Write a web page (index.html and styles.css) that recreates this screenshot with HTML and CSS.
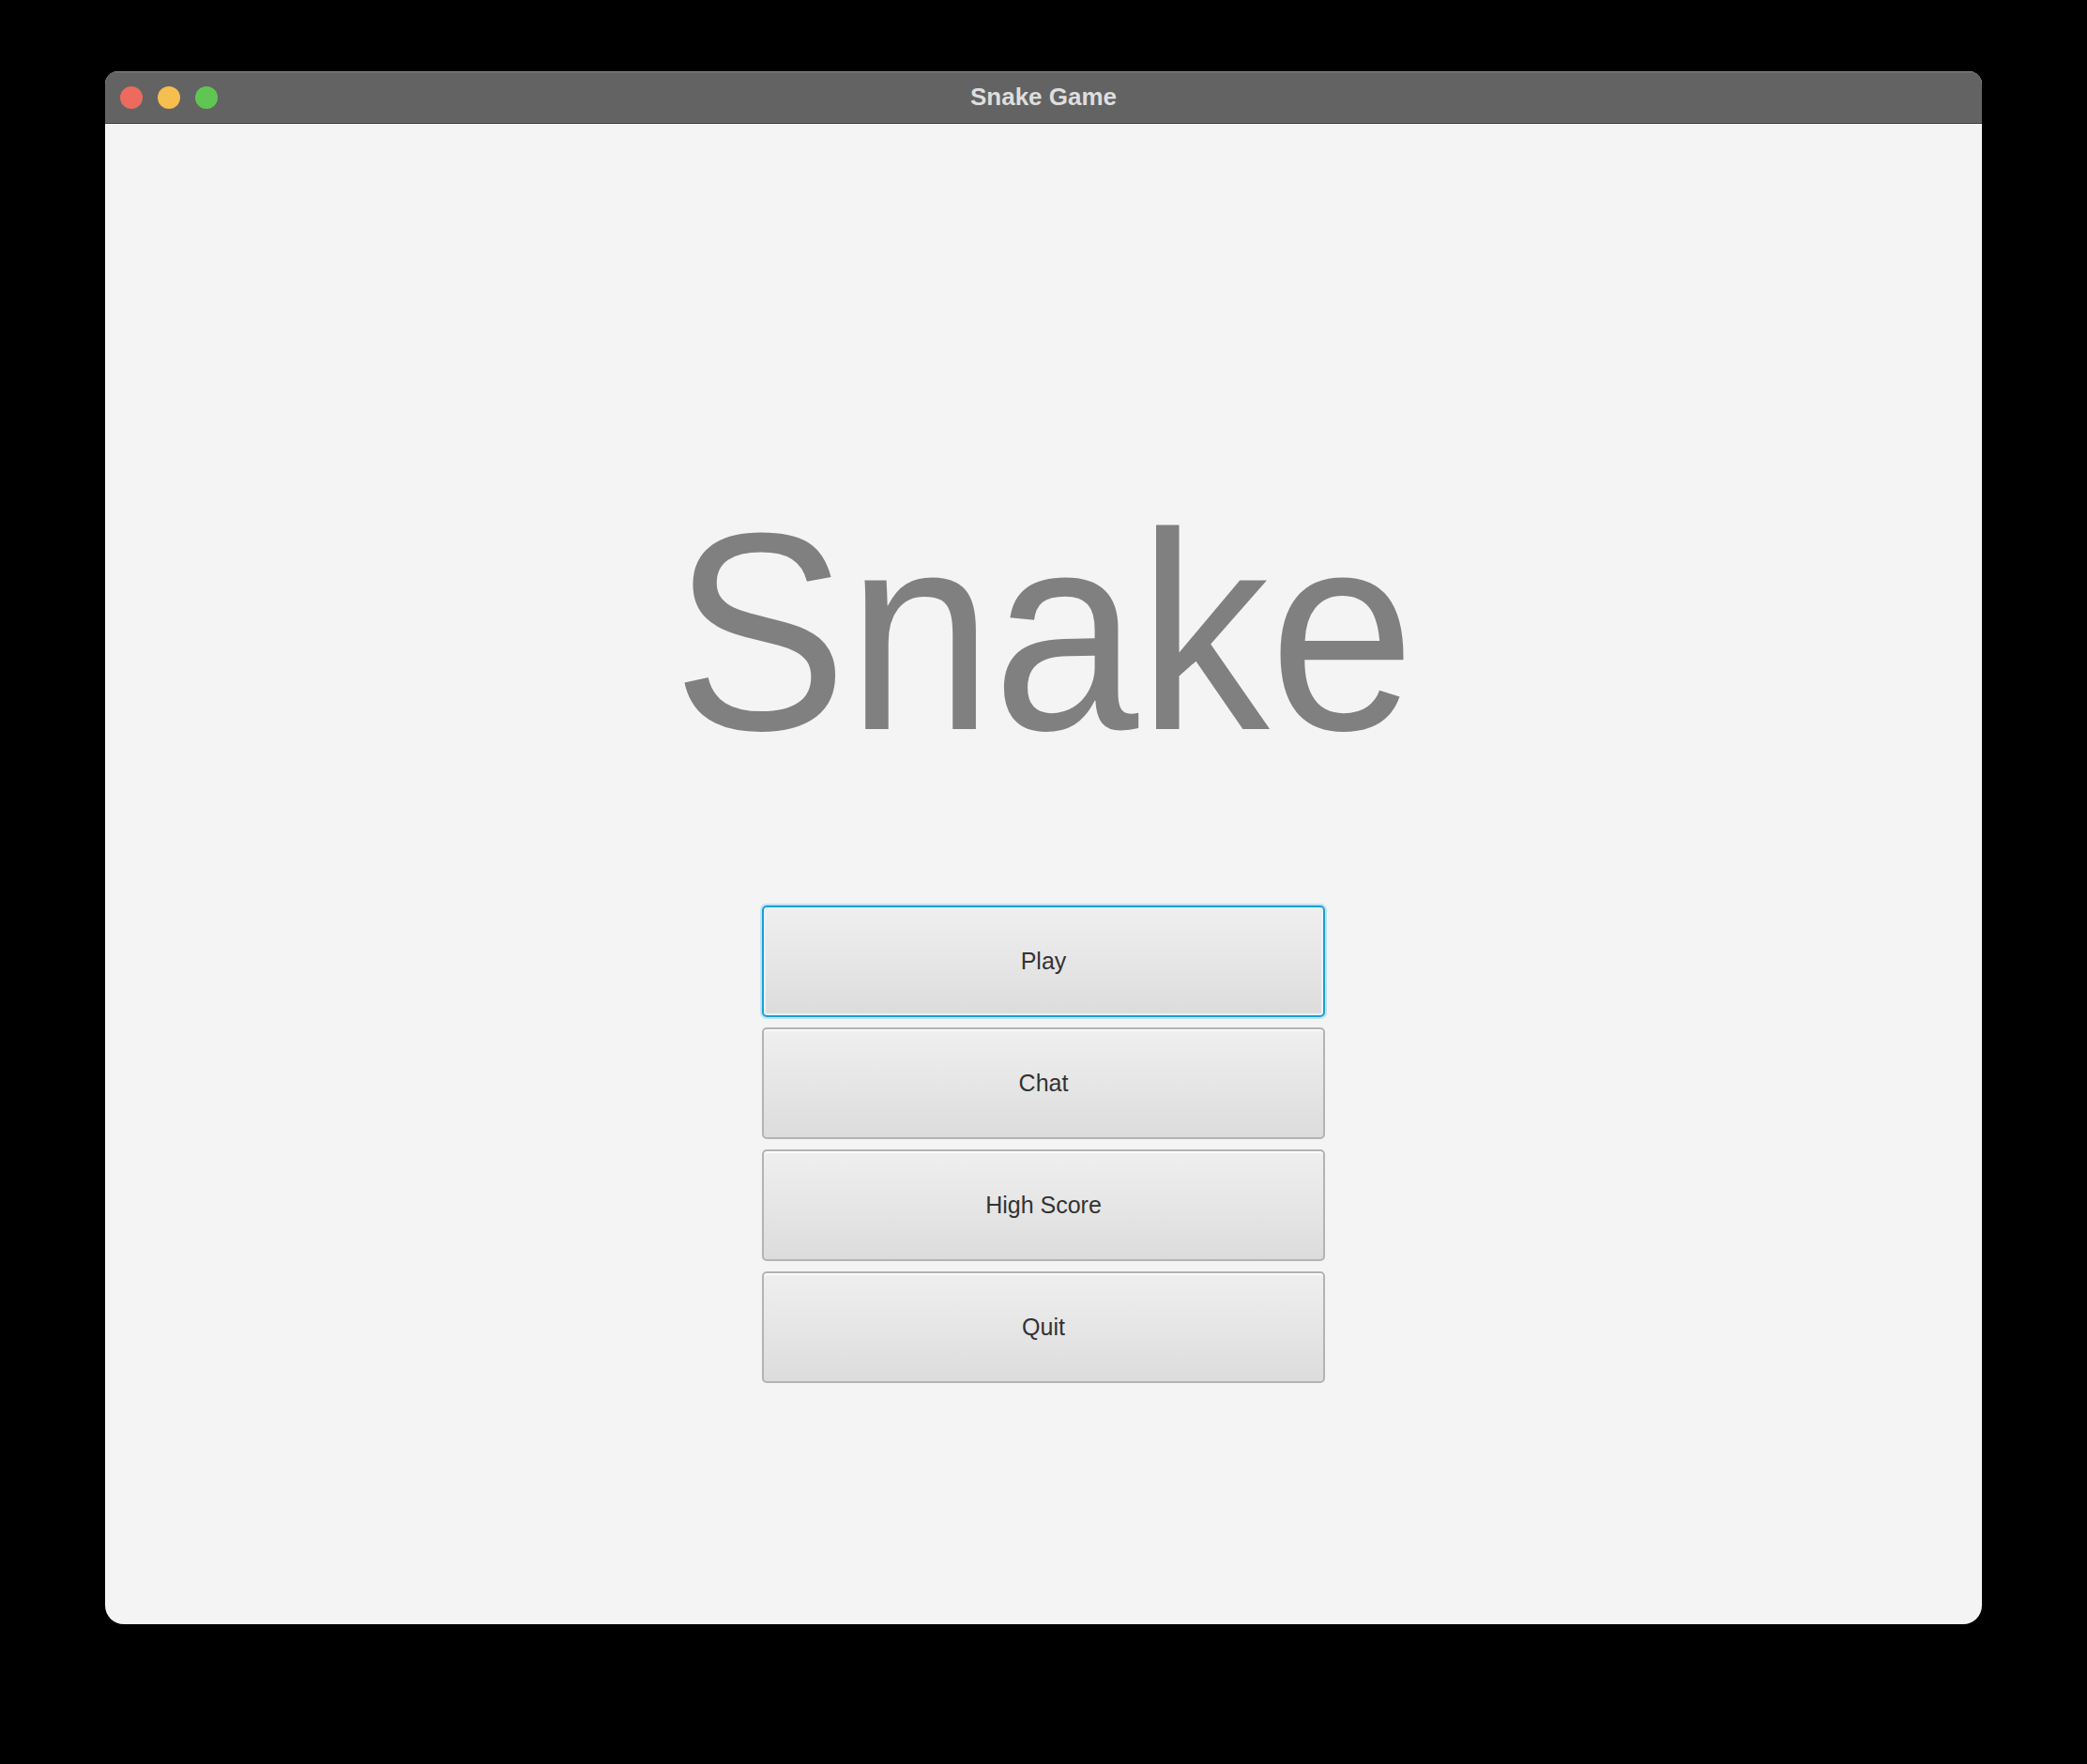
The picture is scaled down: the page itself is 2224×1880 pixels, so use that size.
FILE: index.html
```html
<!DOCTYPE html>
<html>
<head>
<meta charset="utf-8">
<title>Snake Game</title>
<link rel="stylesheet" href="styles.css">
</head>
<body>
<div class="window">
  <div class="titlebar">
    <div class="lights">
      <span class="light red"></span>
      <span class="light yellow"></span>
      <span class="light green"></span>
    </div>
    <div class="title">Snake Game</div>
  </div>
  <div class="content">
    <div class="logo"><span class="logo-text">Snake</span></div>
    <div class="menu">
      <button class="btn focused">Play</button>
      <button class="btn">Chat</button>
      <button class="btn">High Score</button>
      <button class="btn">Quit</button>
    </div>
  </div>
</div>
</body>
</html>
```
FILE: styles.css
```css
html, body {
  margin: 0;
  padding: 0;
  background: #000;
  width: 2224px;
  height: 1880px;
  overflow: hidden;
}
.window {
  margin-left: 112px;
  margin-top: 76px;
  width: 2000px;
  height: 1655px;
  display: flex;
  flex-direction: column;
  border-radius: 14px 14px 20px 20px;
  overflow: hidden;
  background: #f4f4f4;
}
.titlebar {
  position: relative;
  height: 56px;
  background: #636363;
  border-top: 1px solid #8c8c8c;
  border-bottom: 1px solid #3c3c3c;
  box-sizing: border-box;
  display: flex;
  align-items: center;
  justify-content: center;
  flex-shrink: 0;
}
.lights {
  position: absolute;
  left: 16px;
  top: 15px;
  display: flex;
  gap: 16px;
}
.light {
  width: 24px;
  height: 24px;
  border-radius: 50%;
  display: block;
}
.red { background: #ec6a5e; }
.yellow { background: #f4bf4f; }
.green { background: #61c554; }
.title {
  font-family: "Liberation Sans", Arial, sans-serif;
  font-weight: bold;
  font-size: 26px;
  color: #dedede;
  line-height: 1;
  padding-bottom: 3px;
}
.content {
  flex: 1;
  display: flex;
  flex-direction: column;
  align-items: center;
  padding-top: 391px;
}
.logo {
  height: 300px;
  line-height: 300px;
  font-family: "Liberation Sans", Arial, sans-serif;
  font-size: 300px;
  color: #808080;
  text-align: center;
}
.logo-text {
  display: inline-block;
  transform: scaleX(0.93);
}
.menu {
  margin-top: 142px;
  display: flex;
  flex-direction: column;
  gap: 11px;
}
.btn {
  width: 600px;
  height: 119px;
  box-sizing: border-box;
  border: 2px solid #b3b3b3;
  border-radius: 5px;
  background: linear-gradient(to bottom, #efefef 0%, #e6e6e6 50%, #dcdcdc 100%);
  box-shadow: inset 0 2px 0 #fbfbfb;
  font-family: "Liberation Sans", Arial, sans-serif;
  font-size: 25px;
  color: #333;
  padding: 0;
  margin: 0;
  outline: none;
}
.btn.focused {
  border: 2px solid #1a9fd6;
  box-shadow: 0 0 0 2px #bfe3f3, inset 0 0 0 2px #e8f4fa;
}
```
